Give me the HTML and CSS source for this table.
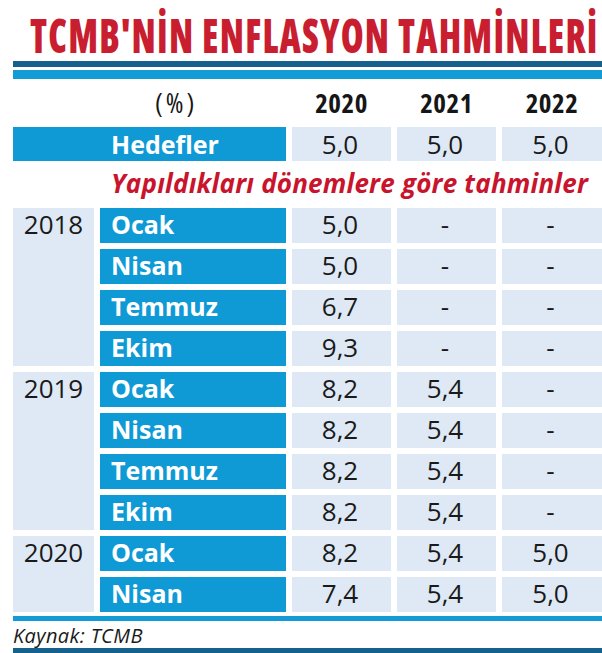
FILE: index.html
```html
<!DOCTYPE html>
<html lang="tr">
<head>
<meta charset="utf-8">
<title>TCMB'NİN ENFLASYON TAHMİNLERİ</title>
<link rel="stylesheet" href="styles.css">
</head>
<body>
<div class="page">
  <h1 class="title"><span class="title-text">TCMB'NİN ENFLASYON TAHMİNLERİ</span></h1>
  <div class="bar bar-dark"></div>
  <div class="bar bar-light"></div>

  <div class="grid head">
    <div class="pct">(%)</div>
    <div class="yr">2020</div>
    <div class="yr">2021</div>
    <div class="yr">2022</div>
  </div>

  <div class="grid target">
    <div class="label label-wide">Hedefler</div>
    <div class="val">5,0</div>
    <div class="val">5,0</div>
    <div class="val">5,0</div>
  </div>

  <div class="subtitle">Yapıldıkları dönemlere göre tahminler</div>

  <div class="grid data">
    <div class="year span4">2018</div>
    <div class="label">Ocak</div><div class="val">5,0</div><div class="val">-</div><div class="val">-</div>
    <div class="label">Nisan</div><div class="val">5,0</div><div class="val">-</div><div class="val">-</div>
    <div class="label">Temmuz</div><div class="val">6,7</div><div class="val">-</div><div class="val">-</div>
    <div class="label">Ekim</div><div class="val">9,3</div><div class="val">-</div><div class="val">-</div>

    <div class="year span4">2019</div>
    <div class="label">Ocak</div><div class="val">8,2</div><div class="val">5,4</div><div class="val">-</div>
    <div class="label">Nisan</div><div class="val">8,2</div><div class="val">5,4</div><div class="val">-</div>
    <div class="label">Temmuz</div><div class="val">8,2</div><div class="val">5,4</div><div class="val">-</div>
    <div class="label">Ekim</div><div class="val">8,2</div><div class="val">5,4</div><div class="val">-</div>

    <div class="year span2">2020</div>
    <div class="label">Ocak</div><div class="val">8,2</div><div class="val">5,4</div><div class="val">5,0</div>
    <div class="label">Nisan</div><div class="val">7,4</div><div class="val">5,4</div><div class="val">5,0</div>
  </div>

  <div class="bar bar-foot"></div>
  <div class="source">Kaynak: TCMB</div>
  <div class="bar bar-bottom"></div>
</div>
</body>
</html>
```

FILE: styles.css
```css
html, body {
  margin: 0;
  padding: 0;
  background: #ffffff;
}

.page {
  width: 602px;
  padding-left: 13px;
  box-sizing: border-box;
  font-family: "Open Sans", "Noto Sans", sans-serif;
  color: #1a1a1a;
}

.title {
  margin: 0;
  height: 61px;
  font-size: 37px;
  font-weight: 800;
  color: #c81e2f;
}

.title-text {
  display: block;
  margin: 0;
  padding-top: 20px;
  padding-left: 17px;
  line-height: 37px;
  font-family: "Open Sans", "Noto Sans", sans-serif;
  font-stretch: 75%;
  font-weight: 800;
  font-size: 37px;
  letter-spacing: 1.2px;
  white-space: nowrap;
  transform: scaleY(1.27);
  transform-origin: 0 53px;
}

.bar { width: 100%; }
.bar-dark { height: 6px; background: #16608e; }
.bar-light { height: 9px; margin-top: 3px; background: #129bd5; }
.bar-foot { height: 5px; margin-top: 4px; background: #129bd5; }
.bar-bottom { height: 5px; margin-top: 0; background: #16608e; }

.grid {
  display: grid;
  grid-template-columns: 81px 186px 99px 99px 1fr;
  column-gap: 6px;
}

.head {
  height: 48px;
  align-items: center;
  font-family: "Open Sans", "Noto Sans", sans-serif;
  font-stretch: 75%;
  font-size: 27px;
  line-height: 48px;
  color: #161616;
}

.pct {
  grid-column: span 2;
  padding-left: 142px;
  letter-spacing: 3px;
}

.yr {
  text-align: center;
  font-weight: 700;
  letter-spacing: 0.5px;
}

.target {
  grid-auto-rows: 34px;
}

.label {
  background: #0f9ad6;
  color: #ffffff;
  font-weight: 700;
  font-size: 25px;
  line-height: 34px;
  padding-left: 11px;
}

.label-wide {
  grid-column: span 2;
  padding-left: 98px;
}

.val {
  background: #dee9f5;
  text-align: center;
  font-size: 26px;
  line-height: 34px;
  padding-right: 3px;
}

.subtitle {
  height: 47px;
  line-height: 44px;
  padding-left: 98px;
  font-style: italic;
  font-weight: 700;
  font-size: 26px;
  letter-spacing: 0.2px;
  color: #c8142c;
  white-space: nowrap;
}

.data {
  grid-auto-rows: 35px;
  row-gap: 6px;
}

.data .label,
.data .val {
  line-height: 33px;
}

.year {
  background: #dee9f5;
  font-size: 26px;
  line-height: 33px;
  text-align: center;
}

.span4 { grid-row: span 4; }
.span2 { grid-row: span 2; }

.source {
  height: 23px;
  padding-top: 4px;
  line-height: 22px;
  font-style: italic;
  font-size: 20px;
  color: #1a1a1a;
  letter-spacing: 0.4px;
}
```
